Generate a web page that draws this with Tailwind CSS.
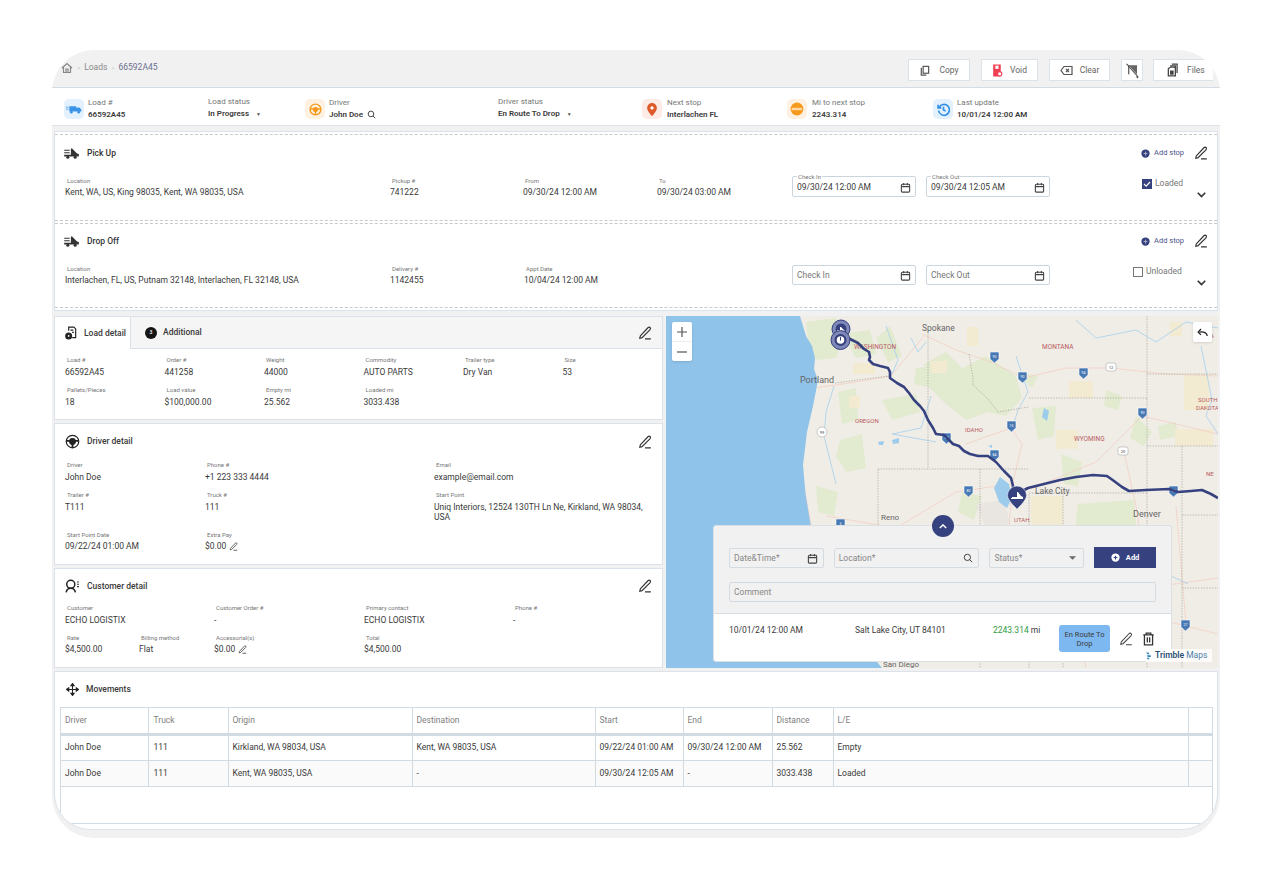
<!DOCTYPE html>
<html>
<head>
    <title>Load 66592A45</title>
    <script src="https://cdn.jsdelivr.net/npm/@tailwindcss/browser@4"></script>
</head>
<body class="bg-white [font-family:Roboto,sans-serif] text-[#3a3a3a]">
<div class="pt-[50px] pl-[52px]">
<div class="w-[1168px] h-[788px] rounded-[42px] bg-[#f1f1f1] overflow-hidden flex flex-col">

    <!-- Breadcrumb + actions -->
    <div class="h-[38px] shrink-0 flex items-center border-b border-[#d3dce4] pl-[9px]">
        <svg class="w-[12px] h-[12px] -mt-[1px]" viewBox="0 0 24 24" fill="none" stroke="#888" stroke-width="2.400"><path d="M2 12 12 3l10 9M5 10v11h14V10M10 21v-7h4v7"/></svg>
        <span class="text-[#c4c4c4] text-[6px] mx-[4px] -mt-[2px]">&gt;</span>
        <span class="text-[8.500px] text-[#8a8a8a] -mt-[2px]">Loads</span>
        <span class="text-[#c4c4c4] text-[6px] mx-[4px] -mt-[2px]">&gt;</span>
        <span class="text-[8.500px] text-[#6a6f92] -mt-[2px]">66592A45</span>
        <div class="ml-auto flex items-center gap-[11px] pt-[3px] pr-[7px]">
            <div class="w-[62px] h-[22px] bg-white border border-[#dbe2e8] flex items-center justify-center gap-[9px] text-[8.500px] text-[#666]">
                <svg class="w-[11px] h-[11px]" viewBox="0 0 24 24" fill="none" stroke="#555" stroke-width="2.600"><rect x="9" y="3" width="12" height="15"/><path d="M5 6v16h11"/></svg>Copy
            </div>
            <div class="w-[57px] h-[22px] bg-white border border-[#dbe2e8] flex items-center justify-center gap-[7px] text-[8.500px] text-[#666]">
                <svg class="w-[11px] h-[13px]" viewBox="0 0 20 24"><path d="M2 1h14v22H2z" fill="#ef3f52"/><rect x="6" y="3" width="6" height="6" fill="#fff"/><circle cx="14" cy="18" r="4" fill="#fff" stroke="#ef3f52" stroke-width="2"/></svg>Void
            </div>
            <div class="w-[61px] h-[22px] bg-white border border-[#dbe2e8] flex items-center justify-center gap-[7px] text-[8.500px] text-[#666]">
                <svg class="w-[13px] h-[11px]" viewBox="0 0 26 20" fill="none" stroke="#555" stroke-width="2.400"><path d="M8 2h16v16H8L2 10z"/><path d="m12 7 6 6m0-6-6 6"/></svg>Clear
            </div>
            <div class="w-[22px] h-[22px] bg-white border border-[#dbe2e8] flex items-center justify-center">
                <svg class="w-[15px] h-[17px]" viewBox="0 0 20 22"><path d="M5 4h11v12z" fill="#666"/><path d="M2 2l15 17" stroke="#444" stroke-width="1.500"/><path d="M5 4v12" stroke="#444" stroke-width="1.500"/><path d="m14.500 19 4 0-2 2.500z" fill="#444"/></svg>
            </div>
            <div class="w-[60px] -ml-[1px] h-[22px] bg-white border-y border-l border-[#dbe2e8] flex items-center gap-[8px] pl-[13px] text-[8.500px] text-[#666]">
                <svg class="w-[12px] h-[14px]" viewBox="0 0 20 24" fill="none" stroke="#444" stroke-width="2.200"><path d="M8 2h9v15"/><path d="M5 5h9v3"/><path d="M2 10l4-3h8v15H2z"/><rect x="6" y="14" width="4" height="5" fill="#444"/></svg>Files
            </div>
        </div>
    </div>

    <!-- Summary bar -->
    <div class="h-[38px] shrink-0 bg-white border-b border-[#dde3e8] flex items-center pl-[12px] pt-[5px] text-[8px]">
        <div class="w-[144px] flex items-center gap-[4px]">
            <div class="w-[20px] h-[20px] rounded-[5px] bg-[#e3f0fd] flex items-center justify-center">
                <svg class="w-[16px] h-[9px]" viewBox="0 0 24 12" fill="#3b93e8"><path d="M0 2h4v1H0zM0 5h4v1H0zM5 1h10v8H5zM15 3h5l3 3v3h-8z"/><circle cx="8" cy="10" r="2"/><circle cx="19" cy="10" r="2"/></svg>
            </div>
            <div><div class="text-[#777] leading-[10px]">Load #</div><div class="font-semibold leading-[13px]">66592A45</div></div>
        </div>
        <div class="w-[97px]">
            <div class="text-[#777] leading-[10px]">Load status</div>
            <div class="font-semibold leading-[13px]">In Progress <span class="ml-[5px] text-[5px] text-[#555]">&#9660;</span></div>
        </div>
        <div class="w-[193px] flex items-center gap-[4px]">
            <div class="w-[20px] h-[20px] rounded-[5px] bg-[#fef1e2] flex items-center justify-center">
                <svg class="w-[13px] h-[13px]" viewBox="0 0 24 24" fill="none" stroke="#f59a1c" stroke-width="2.500"><circle cx="12" cy="12" r="10"/><circle cx="12" cy="12" r="3.500" fill="#f59a1c"/><path d="M2 11h20M12 14v8"/></svg>
            </div>
            <div>
                <div class="text-[#777] leading-[10px]">Driver</div>
                <div class="font-semibold leading-[13px] flex items-center gap-[4px]">John Doe
                    <svg class="w-[9px] h-[9px]" viewBox="0 0 24 24" fill="none" stroke="#444" stroke-width="2.600"><circle cx="10.500" cy="10.500" r="7.500"/><path d="m16 16 6 6"/></svg>
                </div>
            </div>
        </div>
        <div class="w-[144px]">
            <div class="text-[#777] leading-[10px]">Driver status</div>
            <div class="font-semibold leading-[13px]">En Route To Drop <span class="ml-[5px] text-[5px] text-[#555]">&#9660;</span></div>
        </div>
        <div class="w-[145px] flex items-center gap-[5px]">
            <div class="w-[20px] h-[20px] rounded-[5px] bg-[#fdece6] flex items-center justify-center">
                <svg class="w-[10px] h-[13px]" viewBox="0 0 18 24"><path d="M9 0a9 9 0 0 1 9 9c0 6-9 15-9 15S0 15 0 9a9 9 0 0 1 9-9z" fill="#dd5a2b"/><circle cx="9" cy="9" r="3" fill="#fff"/></svg>
            </div>
            <div><div class="text-[#777] leading-[10px]">Next stop</div><div class="font-semibold leading-[13px]">Interlachen FL</div></div>
        </div>
        <div class="w-[146px] flex items-center gap-[5px]">
            <div class="w-[20px] h-[20px] rounded-[5px] bg-[#fef1e2] flex items-center justify-center">
                <svg class="w-[14px] h-[14px]" viewBox="0 0 24 24"><circle cx="12" cy="12" r="11" fill="#f59a1c"/><rect x="3" y="10" width="18" height="4" fill="#fcd9a6"/></svg>
            </div>
            <div><div class="text-[#777] leading-[10px]">Mi to next stop</div><div class="font-semibold leading-[13px]">2243.314</div></div>
        </div>
        <div class="flex items-center gap-[4px]">
            <div class="w-[20px] h-[20px] rounded-[5px] bg-[#e3f0fd] flex items-center justify-center">
                <svg class="w-[13px] h-[13px]" viewBox="0 0 24 24" fill="none" stroke="#2f8fe8" stroke-width="3"><path d="M4 8a10 10 0 1 1-1 6"/><path d="M2 3v6h6" /><path d="M12 7v6l4 2"/></svg>
            </div>
            <div><div class="text-[#777] leading-[10px]">Last update</div><div class="font-semibold leading-[13px]">10/01/24 12:00 AM</div></div>
        </div>
    </div>

    <div class="flex-1 flex flex-col px-[2px] pt-[5px]">

        <!-- Stops -->
        <div class="h-[180px] shrink-0 bg-white border border-[#dbe2e9] pt-[2px] flex flex-col gap-[2px]">
            <div class="h-[87px] border-y border-dashed border-[#c9c9c9] pl-[10px] pr-[9px]">
                <div class="flex items-center h-[33px] pt-[3px]">
                    <svg class="w-[15px] h-[11px] -ml-[1px]" viewBox="0 0 24 18" fill="#333"><path d="M0 3h9v1.500H0zM0 7h9v1.500H0zM11 1h2l8 8 3 1v4H0v-3h11z"/><circle cx="6" cy="15" r="2.500"/><circle cx="18" cy="15" r="2.500"/></svg>
                    <span class="ml-[8px] text-[8.500px] font-medium text-[#333]">Pick Up</span>
                    <div class="ml-auto flex items-center text-[7.500px] text-[#4a5288]">
                        <svg class="w-[9px] h-[9px] mr-[4px]" viewBox="0 0 24 24"><circle cx="12" cy="12" r="11" fill="#36417f"/><path d="M7 12h10M12 7v10" stroke="#aab" stroke-width="3"/></svg>Add stop
                        <svg class="w-[14px] h-[14px] ml-[10px]" viewBox="0 0 24 24" fill="none" stroke="#333" stroke-width="2"><path d="M4 17 17 3c1-1 3-1 4 0s0 3-1 4L7 20l-4 1zM12 22h10"/></svg>
                    </div>
                </div>
                <div class="flex relative">
                    <div class="w-[325px]"><div class="text-[6px] text-[#777] pl-[2px] leading-[8px] mt-[9px]">Location</div><div class="text-[8.500px] leading-[14px]">Kent, WA, US, King 98035, Kent, WA 98035, USA</div></div>
                    <div class="w-[133px]"><div class="text-[6px] text-[#777] pl-[2px] leading-[8px] mt-[9px]">Pickup #</div><div class="text-[8.500px] leading-[14px]">741222</div></div>
                    <div class="w-[134px]"><div class="text-[6px] text-[#777] pl-[2px] leading-[8px] mt-[9px]">From</div><div class="text-[8.500px] leading-[14px]">09/30/24 12:00 AM</div></div>
                    <div class="w-[135px]"><div class="text-[6px] text-[#777] pl-[2px] leading-[8px] mt-[9px]">To</div><div class="text-[8.500px] leading-[14px]">09/30/24 03:00 AM</div></div>
                    <div class="relative w-[124px] h-[21px] mt-[8px] border border-[#ccd5dd] rounded-[2px] flex items-center justify-between px-[4px] pt-[1px] text-[8.500px]">
                        <span class="absolute -top-[4px] left-[4px] bg-white px-[1px] text-[6px] leading-[7px] text-[#777]">Check In</span>09/30/24 12:00 AM
                        <svg class="w-[11px] h-[11px]" viewBox="0 0 24 24" fill="none" stroke="#444" stroke-width="2.400"><rect x="3" y="5" width="18" height="17" rx="2"/><path d="M3 10h18M8 2v5M16 2v5"/></svg>
                    </div>
                    <div class="relative w-[124px] h-[21px] mt-[8px] ml-[10px] border border-[#ccd5dd] rounded-[2px] flex items-center justify-between px-[4px] pt-[1px] text-[8.500px]">
                        <span class="absolute -top-[4px] left-[4px] bg-white px-[1px] text-[6px] leading-[7px] text-[#777]">Check Out</span>09/30/24 12:05 AM
                        <svg class="w-[11px] h-[11px]" viewBox="0 0 24 24" fill="none" stroke="#444" stroke-width="2.400"><rect x="3" y="5" width="18" height="17" rx="2"/><path d="M3 10h18M8 2v5M16 2v5"/></svg>
                    </div>
                    <div class="ml-[92px] mt-[10px] flex items-center gap-[3px] text-[8.500px] text-[#777] h-[11px]">
                        <svg class="w-[10px] h-[10px]" viewBox="0 0 10 10"><rect width="10" height="10" fill="#36417f"/><path d="m2 5 2.200 2.200L8 3" stroke="#fff" stroke-width="1.200" fill="none"/></svg>Loaded
                    </div>
                    <svg class="absolute right-[2px] top-[24px] w-[9px] h-[6px]" viewBox="0 0 12 8" fill="none" stroke="#333" stroke-width="2.200"><path d="m1 1 5 5 5-5"/></svg>
                </div>
            </div>
            <div class="h-[85px] border-y border-dashed border-[#c9c9c9] pl-[10px] pr-[9px]">
                <div class="flex items-center h-[32px] pt-[2px]">
                    <svg class="w-[15px] h-[11px] -ml-[1px]" viewBox="0 0 24 18" fill="#333"><path d="M0 3h9v1.500H0zM0 7h9v1.500H0zM11 1h2l8 8 3 1v4H0v-3h11z"/><circle cx="6" cy="15" r="2.500"/><circle cx="18" cy="15" r="2.500"/></svg>
                    <span class="ml-[8px] text-[8.500px] font-medium text-[#333]">Drop Off</span>
                    <div class="ml-auto flex items-center text-[7.500px] text-[#4a5288]">
                        <svg class="w-[9px] h-[9px] mr-[4px]" viewBox="0 0 24 24"><circle cx="12" cy="12" r="11" fill="#36417f"/><path d="M7 12h10M12 7v10" stroke="#aab" stroke-width="3"/></svg>Add stop
                        <svg class="w-[14px] h-[14px] ml-[10px]" viewBox="0 0 24 24" fill="none" stroke="#333" stroke-width="2"><path d="M4 17 17 3c1-1 3-1 4 0s0 3-1 4L7 20l-4 1zM12 22h10"/></svg>
                    </div>
                </div>
                <div class="flex relative">
                    <div class="w-[325px]"><div class="text-[6px] text-[#777] pl-[2px] leading-[8px] mt-[9px]">Location</div><div class="text-[8.500px] leading-[14px]">Interlachen, FL, US, Putnam 32148, Interlachen, FL 32148, USA</div></div>
                    <div class="w-[134px]"><div class="text-[6px] text-[#777] pl-[2px] leading-[8px] mt-[9px]">Delivery #</div><div class="text-[8.500px] leading-[14px]">1142455</div></div>
                    <div class="w-[268px]"><div class="text-[6px] text-[#777] pl-[2px] leading-[8px] mt-[9px]">Appt Date</div><div class="text-[8.500px] leading-[14px]">10/04/24 12:00 AM</div></div>
                    <div class="w-[124px] h-[20px] mt-[9px] border border-[#ccd5dd] rounded-[2px] flex items-center justify-between px-[4px] text-[8.500px] text-[#777]">Check In
                        <svg class="w-[11px] h-[11px]" viewBox="0 0 24 24" fill="none" stroke="#444" stroke-width="2.400"><rect x="3" y="5" width="18" height="17" rx="2"/><path d="M3 10h18M8 2v5M16 2v5"/></svg>
                    </div>
                    <div class="w-[124px] h-[20px] mt-[9px] ml-[10px] border border-[#ccd5dd] rounded-[2px] flex items-center justify-between px-[4px] text-[8.500px] text-[#777]">Check Out
                        <svg class="w-[11px] h-[11px]" viewBox="0 0 24 24" fill="none" stroke="#444" stroke-width="2.400"><rect x="3" y="5" width="18" height="17" rx="2"/><path d="M3 10h18M8 2v5M16 2v5"/></svg>
                    </div>
                    <div class="ml-[83px] mt-[10px] flex items-center gap-[3px] text-[8.500px] text-[#777] h-[11px]">
                        <span class="w-[10px] h-[10px] border border-[#777] bg-white"></span>Unloaded
                    </div>
                    <svg class="absolute right-[2px] top-[24px] w-[9px] h-[6px]" viewBox="0 0 12 8" fill="none" stroke="#333" stroke-width="2.200"><path d="m1 1 5 5 5-5"/></svg>
                </div>
            </div>
        </div>

        <div class="flex gap-[3px] mt-[5px] h-[352px] shrink-0">
            <!-- Detail cards -->
            <div class="w-[609px] flex flex-col gap-[3px]">
                <div class="h-[104px] bg-white border border-[#dbe2e9]">
                    <div class="h-[32px] bg-[#f5f5f5] border-b border-[#dbe2e9] flex items-stretch pr-[10px]">
                        <div class="w-[76px] -mb-px bg-white border-r border-[#dbe2e9] flex items-center pl-[10px] gap-[7px] text-[8.500px] font-medium">
                            <svg class="w-[12px] h-[14px]" viewBox="0 0 20 24" fill="none" stroke="#222" stroke-width="2"><path d="M6 8V2h9l3 3v15h-6"/><circle cx="6" cy="17" r="5" fill="#222"/><path d="M9 7h5M12 11h3"/><circle cx="6" cy="17" r="1.500" fill="#fff" stroke="none"/></svg>Load detail
                        </div>
                        <div class="flex items-center pl-[14px] gap-[6px] text-[8.500px] font-medium">
                            <span class="w-[12px] h-[12px] rounded-full bg-[#151515] text-white text-[5px] flex items-center justify-center">3</span>Additional
                        </div>
                        <svg class="ml-auto self-center w-[14px] h-[14px]" viewBox="0 0 24 24" fill="none" stroke="#333" stroke-width="2"><path d="M4 17 17 3c1-1 3-1 4 0s0 3-1 4L7 20l-4 1zM12 22h10"/></svg>
                    </div>
                    <div class="grid grid-cols-[99.500px_99.500px_99.500px_99.500px_99.500px_auto] pl-[10px] pt-[7px] gap-y-[6px]">
                        <div><div class="text-[6px] text-[#777] pl-[2px] leading-[8px]">Load #</div><div class="text-[8.500px] leading-[16px]">66592A45</div></div>
                        <div><div class="text-[6px] text-[#777] pl-[2px] leading-[8px]">Order #</div><div class="text-[8.500px] leading-[16px]">441258</div></div>
                        <div><div class="text-[6px] text-[#777] pl-[2px] leading-[8px]">Weight</div><div class="text-[8.500px] leading-[16px]">44000</div></div>
                        <div><div class="text-[6px] text-[#777] pl-[2px] leading-[8px]">Commodity</div><div class="text-[8.500px] leading-[16px]">AUTO PARTS</div></div>
                        <div><div class="text-[6px] text-[#777] pl-[2px] leading-[8px]">Trailer type</div><div class="text-[8.500px] leading-[16px]">Dry Van</div></div>
                        <div><div class="text-[6px] text-[#777] pl-[2px] leading-[8px]">Size</div><div class="text-[8.500px] leading-[16px]">53</div></div>
                        <div><div class="text-[6px] text-[#777] pl-[2px] leading-[8px]">Pallets/Pieces</div><div class="text-[8.500px] leading-[16px]">18</div></div>
                        <div><div class="text-[6px] text-[#777] pl-[2px] leading-[8px]">Load value</div><div class="text-[8.500px] leading-[16px]">$100,000.00</div></div>
                        <div><div class="text-[6px] text-[#777] pl-[2px] leading-[8px]">Empty mi</div><div class="text-[8.500px] leading-[16px]">25.562</div></div>
                        <div><div class="text-[6px] text-[#777] pl-[2px] leading-[8px]">Loaded mi</div><div class="text-[8.500px] leading-[16px]">3033.438</div></div>
                    </div>
                </div>

                <div class="h-[142px] bg-white border border-[#dbe2e9] pl-[10px] pr-[10px]">
                    <div class="flex items-center h-[35px] gap-[7px] text-[8.500px] font-medium">
                        <svg class="w-[15px] h-[15px]" viewBox="0 0 24 24" fill="none" stroke="#222" stroke-width="2"><circle cx="12" cy="12" r="10"/><circle cx="12" cy="12" r="4.500" fill="#222"/><path d="M2 11h20M12 13v9" stroke-width="3"/></svg>Driver detail
                        <svg class="ml-auto w-[14px] h-[14px]" viewBox="0 0 24 24" fill="none" stroke="#333" stroke-width="2"><path d="M4 17 17 3c1-1 3-1 4 0s0 3-1 4L7 20l-4 1zM12 22h10"/></svg>
                    </div>
                    <div class="grid grid-cols-[140px_229px_1fr] pt-[2px]">
                        <div class="h-[30px]"><div class="text-[6px] text-[#777] pl-[2px] leading-[8px]">Driver</div><div class="text-[8.500px] leading-[16px]">John Doe</div></div>
                        <div><div class="text-[6px] text-[#777] pl-[2px] leading-[8px]">Phone #</div><div class="text-[8.500px] leading-[16px]">+1 223 333 4444</div></div>
                        <div><div class="text-[6px] text-[#777] pl-[2px] leading-[8px]">Email</div><div class="text-[8.500px] leading-[16px]">example@email.com</div></div>
                        <div class="h-[40px]"><div class="text-[6px] text-[#777] pl-[2px] leading-[8px]">Trailer #</div><div class="text-[8.500px] leading-[16px]">T111</div></div>
                        <div><div class="text-[6px] text-[#777] pl-[2px] leading-[8px]">Truck #</div><div class="text-[8.500px] leading-[16px]">111</div></div>
                        <div><div class="text-[6px] text-[#777] pl-[2px] leading-[8px]">Start Point</div><div class="text-[8.500px] leading-[10px] pt-[3px]">Uniq Interiors, 12524 130TH Ln Ne, Kirkland, WA 98034, USA</div></div>
                        <div><div class="text-[6px] text-[#777] pl-[2px] leading-[8px]">Start Point Date</div><div class="text-[8.500px] leading-[15px]">09/22/24 01:00 AM</div></div>
                        <div><div class="text-[6px] text-[#777] pl-[2px] leading-[8px]">Extra Pay</div><div class="text-[8.500px] leading-[15px] flex items-center gap-[3px]">$0.00
                            <svg class="w-[9px] h-[9px]" viewBox="0 0 24 24" fill="none" stroke="#555" stroke-width="2.400"><path d="M4 17 17 3c1-1 3-1 4 0s0 3-1 4L7 20l-4 1zM12 22h10"/></svg></div></div>
                    </div>
                </div>

                <div class="h-[100px] bg-white border border-[#dbe2e9] pl-[10px] pr-[10px]">
                    <div class="flex items-center h-[34px] gap-[7px] text-[8.500px] font-medium">
                        <svg class="w-[15px] h-[14px]" viewBox="0 0 26 24" fill="none" stroke="#222" stroke-width="2.600"><circle cx="10" cy="9" r="7"/><path d="M2 23c1-5 4-7 8-7s7 2 8 7"/><path d="M21 5h3M21 9h3M21 13h3" stroke-width="2"/></svg>Customer detail
                        <svg class="ml-auto w-[14px] h-[14px]" viewBox="0 0 24 24" fill="none" stroke="#333" stroke-width="2"><path d="M4 17 17 3c1-1 3-1 4 0s0 3-1 4L7 20l-4 1zM12 22h10"/></svg>
                    </div>
                    <div class="grid grid-cols-[74px_75px_150px_149px_auto] pt-[1px]">
                        <div class="col-span-2 h-[30px]"><div class="text-[6px] text-[#777] pl-[2px] leading-[8px]">Customer</div><div class="text-[8.500px] leading-[16px]">ECHO LOGISTIX</div></div>
                        <div><div class="text-[6px] text-[#777] pl-[2px] leading-[8px]">Customer Order #</div><div class="text-[8.500px] leading-[16px]">-</div></div>
                        <div><div class="text-[6px] text-[#777] pl-[2px] leading-[8px]">Primary contact</div><div class="text-[8.500px] leading-[16px]">ECHO LOGISTIX</div></div>
                        <div><div class="text-[6px] text-[#777] pl-[2px] leading-[8px]">Phone #</div><div class="text-[8.500px] leading-[16px]">-</div></div>
                        <div><div class="text-[6px] text-[#777] pl-[2px] leading-[8px]">Rate</div><div class="text-[8.500px] leading-[15px]">$4,500.00</div></div>
                        <div><div class="text-[6px] text-[#777] pl-[2px] leading-[8px]">Billing method</div><div class="text-[8.500px] leading-[15px]">Flat</div></div>
                        <div><div class="text-[6px] text-[#777] pl-[2px] leading-[8px]">Accessorial(s)</div><div class="text-[8.500px] leading-[15px] flex items-center gap-[3px]">$0.00
                            <svg class="w-[9px] h-[9px]" viewBox="0 0 24 24" fill="none" stroke="#555" stroke-width="2.400"><path d="M4 17 17 3c1-1 3-1 4 0s0 3-1 4L7 20l-4 1zM12 22h10"/></svg></div></div>
                        <div><div class="text-[6px] text-[#777] pl-[2px] leading-[8px]">Total</div><div class="text-[8.500px] leading-[15px]">$4,500.00</div></div>
                    </div>
                </div>
            </div>

            <!-- Map -->
            <div class="relative flex-1 overflow-hidden bg-[#f0ede6]">
                <svg class="absolute inset-0 w-full h-full" viewBox="0 0 552 352">
                    <defs><filter id="soft"><feGaussianBlur stdDeviation="0.700"/></filter></defs>
                    <g filter="url(#soft)">
                        <!-- forest and park tint -->
                        <g fill="#e2ead0">
                            <path d="M140 6 170 2 178 20 170 42 150 44 142 24zM176 18 204 14 210 38 190 42zM210 22 224 10 236 40 222 46z"/>
                            <path d="M258 48 280 36 296 52 320 40 350 60 356 82 340 100 322 96 300 104 280 88 262 70z"/>
                            <path d="M172 76 190 72 192 104 176 108zM174 124 196 118 200 152 180 156 170 140zM216 84 250 78 254 96 226 104zM250 52 272 50 264 72 248 68z"/>
                            <path d="M366 92 390 90 388 120 372 124zM395 138 416 146 412 170 398 168zM412 188 468 184 472 232 428 240 408 220zM350 56 372 60 366 72zM470 100 486 116 478 130 464 122z"/>
                            <path d="M440 74 456 80 452 94 438 90zM492 110 510 106 512 120 494 124zM296 176 316 180 308 204 292 196zM150 170 172 176 168 200 152 196z"/>
                        </g>
                        <g fill="#f3ead2">
                            <path d="M265 45h16v12h-16zM301 11h11v19h-11zM187 47h22v11h-22zM183 80h11v12h-11zM403 65h24v17h-24zM390 114h22v19h-22zM365 180h32v31h-32zM518 58h25v36h-25zM509 113h38v17h-38zM504 6h12v14h-12z"/>
                        </g>
                        <path d="M310 188 338 184 344 208 320 212z" fill="#e9e5e0"/>
                        <!-- highways -->
                        <g fill="none" stroke="#f1cfc5" stroke-width="0.800">
                            <path d="M256 18 290 34 325 46 358 62 400 52 445 52 500 58 552 60"/>
                            <path d="M134 74 190 66 225 60 258 20"/>
                            <path d="M140 78 132 120 138 170 146 215"/>
                            <path d="M300 128 345 112 356 128 346 170 342 230"/>
                            <path d="M160 200 230 212 290 176 345 168"/>
                            <path d="M366 172 430 146 476 100 552 118"/>
                            <path d="M458 136 470 190 478 240 480 300 552 318"/>
                            <path d="M230 212 248 270 222 352"/>
                            <path d="M350 220 372 270 480 272 552 262"/>
                            <path d="M400 250 420 352M510 190 520 308"/>
                        </g>
                        <!-- rivers -->
                        <g fill="none" stroke="#a5cfec" stroke-width="0.800">
                            <path d="M245 22 252 36 260 26M220 10 232 44 226 58"/>
                            <path d="M350 40 362 76 352 94 345 116"/>
                            <path d="M410 4 430 22 470 14 490 26 520 6 552 12"/>
                            <path d="M535 30 546 84 540 100 552 118"/>
                            <path d="M265 80 255 112 226 118 270 126"/>
                            <path d="M168 70 160 96 158 120 170 168"/>
                            <path d="M505 260 522 268"/>
                        </g>
                        <!-- state lines -->
                        <g fill="none" stroke="#a8a69c" stroke-width="0.700" stroke-dasharray="1.500 1.200">
                            <path d="M262 18V153"/>
                            <path d="M169 67 223 60"/>
                            <path d="M212 153H363"/>
                            <path d="M303 38 307 62 307 69 321 82 332 96 363 91"/>
                            <path d="M363 82H481V177H363V352"/>
                            <path d="M481 0V82"/>
                            <path d="M397 177V352"/>
                            <path d="M481 58H552M481 130H552"/>
                            <path d="M212 153V215M314 153V352"/>
                            <path d="M516 130V352M516 199H552M516 272H552M481 177V352"/>
                        </g>
                    </g>
                    <!-- ocean + lakes -->
                    <path d="M0 0H134L140 20 146 30 149 42 148 53 152 64 147 90 141 116 137 149 139.500 178 145 211 151 230 162 262 190 320 216 352H0Z" fill="#8fc3ea"/>
                    <path d="M334 161 343 168 346 182 341 192 333 186 328 172z" fill="#9ccbec"/>
                    <path d="M226 124l7-2 0 5-6 1zM212 126l6-1-1 4-4 0zM378 92l5 3-2 10-5-4zM322 130l4-1v3z" fill="#9ccbec"/>
                    <!-- interstate shields -->
                    <g fill="#4678b4" stroke="#fff" stroke-width="0.600">
                        <path d="M324 36h9v7l-4.500 4-4.500-4z"/>
                        <path d="M352 56h9v7l-4.500 4-4.500-4z"/>
                        <path d="M341 105h9v7l-4.500 4-4.500-4z"/>
                        <path d="M324 134h9v7l-4.500 4-4.500-4z"/>
                        <path d="M298 170h9v7l-4.500 4-4.500-4z"/>
                        <path d="M472 92h9v7l-4.500 4-4.500-4z"/>
                        <path d="M413 52h9v7l-4.500 4-4.500-4z"/>
                        <path d="M503 170h9v7l-4.500 4-4.500-4z"/>
                        <path d="M170 203h9v7l-4.500 4-4.500-4z"/>
                        <path d="M515 304h9v7l-4.500 4-4.500-4z"/>
                        <path d="M276 117h9v7l-4.500 4-4.500-4z"/>
                    </g>
                    <g font-family="Roboto,sans-serif" font-size="3.500" text-anchor="middle" fill="#fff">
                        <text x="328.500" y="42">90</text><text x="356.500" y="62">90</text><text x="345.500" y="111">15</text><text x="328.500" y="140">84</text><text x="302.500" y="176">80</text><text x="476.500" y="98">90</text><text x="417.500" y="58">94</text><text x="507.500" y="176">80</text><text x="174.500" y="209">5</text><text x="519.500" y="310">27</text><text x="280.500" y="123">84</text>
                    </g>
                    <g fill="#fff" stroke="#999" stroke-width="0.500"><rect x="440" y="47" width="10" height="8" rx="2"/><rect x="452" y="131" width="10" height="8" rx="2"/><circle cx="156" cy="116" r="5"/></g>
                    <g font-family="Roboto,sans-serif" font-size="4" text-anchor="middle" fill="#444">
                        <text x="445" y="52.500">12</text><text x="457" y="136.500">20</text><text x="156" y="117.500">99</text>
                    </g>
                    <!-- labels -->
                    <g font-family="Roboto,sans-serif">
                        <g fill="#666">
                            <text x="256" y="15" font-size="8.500">Spokane</text>
                            <text x="134" y="67" font-size="9">Portland</text>
                            <text x="215" y="204" font-size="8">Reno</text>
                            <text x="369" y="178" font-size="8.500">Lake City</text>
                            <text x="467" y="201" font-size="9">Denver</text>
                            <text x="217" y="351" font-size="8">San Diego</text>
                        </g>
                        <g fill="#b95a62" font-size="6">
                            <text x="188" y="33" font-size="6.500">WASHINGTON</text>
                            <text x="376" y="33" font-size="6.500">MONTANA</text>
                            <text x="189" y="107">OREGON</text>
                            <text x="299" y="116">IDAHO</text>
                            <text x="408" y="125" font-size="6.500">WYOMING</text>
                            <text x="348" y="206">UTAH</text>
                            <text x="532" y="86">SOUTH</text>
                            <text x="530" y="94">DAKOTA</text>
                            <text x="540" y="160">NE</text>
                            <text x="540" y="22">DA</text>
                        </g>
                    </g>
                    <!-- route -->
                    <path d="M180 21 186 24 192 27 198 33 203 36 204 41 203 44 207 48 214 50 222 52 224 56 224 62 231 67 238 71 243 77 248 84 254 90 258 95 262 104 267 112 270 118 278 119 282 123 287 128 293 130 298 135 304 138 312 140 322 140 330 146 338 155 345 162 347 170 347 178M351 178 362 172 378 168 394 164 410 161 427 159 441 160 448 165 456 171 463 175 480 174 503 173 512 176 525 175 536 174 545 178 552 182" fill="none" stroke="#36417f" stroke-width="2.600" stroke-linejoin="round"/>
                    <!-- pickup markers -->
                    <circle cx="175" cy="13" r="9" fill="#7e86b8" stroke="#36417f" stroke-width="1"/>
                    <circle cx="175" cy="13" r="6" fill="#36417f" stroke="#9aa0c8" stroke-width="0.700"/>
                    <path d="M171 14h3v-3l1 0 3 3 1 1h-8z" fill="#fff"/>
                    <circle cx="174.500" cy="24" r="9.500" fill="#7e86b8" stroke="#36417f" stroke-width="1"/>
                    <circle cx="174.500" cy="24" r="6.500" fill="#36417f" stroke="#9aa0c8" stroke-width="0.700"/>
                    <circle cx="174.500" cy="24" r="3.800" fill="#fff"/>
                    <path d="M174.500 21v3.500" stroke="#36417f" stroke-width="1"/>
                    <!-- drop marker -->
                    <path d="M351 170a9.500 9.500 0 0 1 9.500 9.500c0 5-9.500 13.500-9.500 13.500s-9.500-8.500-9.500-13.500a9.500 9.500 0 0 1 9.500-9.500z" fill="#36417f" stroke="#fff" stroke-width="0.500"/>
                    <path d="M345 182h1v-1h5v-5l1 0 3 4 2 1v2h-12z" fill="#fff"/>
                </svg>

                <!-- zoom / undo -->
                <div class="absolute left-[6px] top-[6px] w-[20px] h-[39px] bg-white rounded-[2px] shadow-sm flex flex-col items-center text-[#555]">
                    <div class="h-[20px] w-full border-b border-[#eee] flex items-center justify-center">
                        <svg class="w-[10px] h-[10px]" viewBox="0 0 10 10" stroke="#555" stroke-width="1.200"><path d="M0 5h10M5 0v10"/></svg>
                    </div>
                    <div class="h-[19px] flex items-center"><svg class="w-[10px] h-[10px]" viewBox="0 0 10 10" stroke="#555" stroke-width="1.200"><path d="M0 5h10"/></svg></div>
                </div>
                <div class="absolute right-[6px] top-[6px] w-[19px] h-[20px] bg-white rounded-[2px] shadow-sm flex items-center justify-center">
                    <svg class="w-[11px] h-[9px]" viewBox="0 0 14 11" fill="none" stroke="#222" stroke-width="1.600"><path d="M13 10C13 6 9 4 3 5"/><path d="M5 1 1.500 5 5 8.500"/></svg>
                </div>

                <!-- tracking panel -->
                <div class="absolute left-[47px] top-[209px] w-[459px] h-[137px] bg-[#f1f1f1] border border-[#dbe0e4] rounded-[3px]">
                    <div class="absolute -top-[11px] left-[218px] w-[22px] h-[22px] rounded-full bg-[#36417f] flex items-center justify-center">
                        <svg class="w-[8px] h-[5px]" viewBox="0 0 10 6" fill="none" stroke="#fff" stroke-width="1.800"><path d="m1 5 4-4 4 4"/></svg>
                    </div>
                    <div class="h-[88px] px-[15px] pt-[22px] border-b border-[#d5dde5]">
                        <div class="flex gap-[10px]">
                            <div class="w-[95px] h-[20px] border border-[#d4dbe1] rounded-[2px] flex items-center justify-between pl-[4px] pr-[5px] text-[8.500px] text-[#888]">Date&amp;Time*
                                <svg class="w-[11px] h-[11px]" viewBox="0 0 24 24" fill="none" stroke="#444" stroke-width="2.400"><rect x="3" y="5" width="18" height="17" rx="2"/><path d="M3 10h18M8 2v5M16 2v5"/></svg>
                            </div>
                            <div class="w-[146px] h-[20px] border border-[#d4dbe1] rounded-[2px] flex items-center justify-between pl-[4px] pr-[5px] text-[8.500px] text-[#888]">Location*
                                <svg class="w-[10px] h-[10px]" viewBox="0 0 24 24" fill="none" stroke="#444" stroke-width="2.400"><circle cx="10.500" cy="10.500" r="7.500"/><path d="m16 16 6 6"/></svg>
                            </div>
                            <div class="w-[95px] h-[20px] border border-[#d4dbe1] rounded-[2px] flex items-center justify-between pl-[4px] pr-[7px] text-[8.500px] text-[#888]">Status*
                                <svg class="w-[7px] h-[4px]" viewBox="0 0 8 4" fill="#666"><path d="M0 0h8L4 4z"/></svg>
                            </div>
                            <div class="w-[62px] h-[21px] -mt-px bg-[#36417f] text-white text-[7.500px] font-bold flex items-center justify-center gap-[6px]">
                                <svg class="w-[9px] h-[9px]" viewBox="0 0 24 24"><circle cx="12" cy="12" r="11" fill="#fff"/><path d="M7 12h10M12 7v10" stroke="#36417f" stroke-width="3"/></svg>Add
                            </div>
                        </div>
                        <div class="mt-[14px] h-[20px] border border-[#d4dbe1] rounded-[2px] flex items-center px-[4px] text-[8.500px] text-[#888]">Comment</div>
                    </div>
                    <div class="h-[47px] bg-white rounded-b-[3px] flex items-start pl-[15px] text-[8.500px] relative">
                        <span class="w-[126px] pt-[10px]">10/01/24 12:00 AM</span>
                        <span class="w-[138px] pt-[10px]">Salt Lake City, UT 84101</span>
                        <span class="w-[66px] pt-[10px]"><span class="text-[#2e9b3f]">2243.314</span> mi</span>
                        <div class="w-[51px] h-[27px] mt-[11px] bg-[#7db8f0] rounded-[3px] text-[7.500px] leading-[9px] text-center flex items-center justify-center">En Route To Drop</div>
                        <svg class="w-[14px] h-[14px] mt-[18px] ml-[9px]" viewBox="0 0 24 24" fill="none" stroke="#444" stroke-width="1.800"><path d="M4 17 17 3c1-1 3-1 4 0s0 3-1 4L7 20l-4 1zM12 22h10"/></svg>
                        <svg class="w-[13px] h-[14px] mt-[18px] ml-[9px]" viewBox="0 0 22 24" fill="none" stroke="#333" stroke-width="2.200"><path d="M2 5h18M7 5V2h8v3M4 5v17h14V5M9 9v9M13 9v9"/></svg>
                    </div>
                </div>

                <!-- attribution -->
                <div class="absolute right-[6px] bottom-[6px] w-[66px] h-[13px] bg-white/80 flex items-center text-[8.500px] gap-[2px]">
                    <svg class="w-[7px] h-[8px]" viewBox="0 0 8 8" fill="#2f86b8"><path d="M0 0h3l1 2H2zM1 3h4l1 1-1 1H2zM1 6h3L3 8H2z"/></svg>
                    <span class="font-semibold text-[#2c4f74]">Trimble</span><span class="text-[#4d7ea8]">Maps</span>
                </div>
            </div>
        </div>

        <!-- Movements -->
        <div class="mt-[3px] h-[159px] shrink-0 bg-white border border-[#dbe2e9] rounded-b-[36px] overflow-hidden">
            <div class="h-[35px] flex items-center pl-[11px] gap-[7px] text-[8.500px] font-medium">
                <svg class="w-[13px] h-[13px]" viewBox="0 0 24 24" fill="#222" stroke="#222" stroke-width="2"><path d="M1 12h22M12 1v22" fill="none"/><path d="m12 1-3 4h6zM12 23l-3-4h6zM1 12l4-3v6zM23 12l-4-3v6z"/></svg>Movements
            </div>
            <div class="ml-[5px] mr-[4px] h-[117px] border border-[#d3dbe2]">
                <table class="w-full table-fixed border-collapse text-[8.500px]">
                    <thead class="text-[#808080]">
                        <tr class="h-[26px] border-b-[3px] border-[#d3dbe2] text-left">
                            <th class="w-[87px] font-normal pl-[4px] border-r border-[#d3dbe2]">Driver</th>
                            <th class="w-[80px] font-normal pl-[5px] border-r border-[#d3dbe2]">Truck</th>
                            <th class="w-[184px] font-normal pl-[4px] border-r border-[#d3dbe2]">Origin</th>
                            <th class="w-[183px] font-normal pl-[4px] border-r border-[#d3dbe2]">Destination</th>
                            <th class="w-[88px] font-normal pl-[4px] border-r border-[#d3dbe2]">Start</th>
                            <th class="w-[89px] font-normal pl-[4px] border-r border-[#d3dbe2]">End</th>
                            <th class="w-[61px] font-normal pl-[4px] border-r border-[#d3dbe2]">Distance</th>
                            <th class="w-[355px] font-normal pl-[4px] border-r border-[#d3dbe2]">L/E</th>
                            <th></th>
                        </tr>
                    </thead>
                    <tbody>
                        <tr class="h-[26px] border-b border-[#d3dbe2]">
                            <td class="pl-[4px] border-r border-[#d3dbe2]">John Doe</td>
                            <td class="pl-[5px] border-r border-[#d3dbe2]">111</td>
                            <td class="pl-[4px] border-r border-[#d3dbe2]">Kirkland, WA 98034, USA</td>
                            <td class="pl-[4px] border-r border-[#d3dbe2]">Kent, WA 98035, USA</td>
                            <td class="pl-[4px] border-r border-[#d3dbe2] whitespace-nowrap">09/22/24 01:00 AM</td>
                            <td class="pl-[4px] border-r border-[#d3dbe2] whitespace-nowrap">09/30/24 12:00 AM</td>
                            <td class="pl-[4px] border-r border-[#d3dbe2]">25.562</td>
                            <td class="pl-[4px] border-r border-[#d3dbe2]">Empty</td>
                            <td></td>
                        </tr>
                        <tr class="h-[26px] border-b border-[#d3dbe2] bg-[#fafafa]">
                            <td class="pl-[4px] border-r border-[#d3dbe2]">John Doe</td>
                            <td class="pl-[5px] border-r border-[#d3dbe2]">111</td>
                            <td class="pl-[4px] border-r border-[#d3dbe2]">Kent, WA 98035, USA</td>
                            <td class="pl-[4px] border-r border-[#d3dbe2]">-</td>
                            <td class="pl-[4px] border-r border-[#d3dbe2] whitespace-nowrap">09/30/24 12:05 AM</td>
                            <td class="pl-[4px] border-r border-[#d3dbe2]">-</td>
                            <td class="pl-[4px] border-r border-[#d3dbe2]">3033.438</td>
                            <td class="pl-[4px] border-r border-[#d3dbe2]">Loaded</td>
                            <td></td>
                        </tr>
                    </tbody>
                </table>
            </div>
        </div>
    </div>
</div>
</div>
</body>
</html>
